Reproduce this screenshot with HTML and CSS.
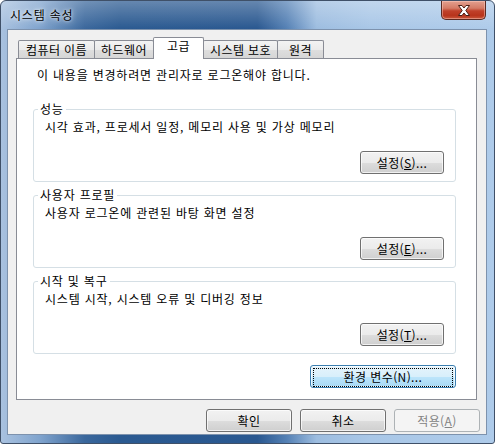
FILE: index.html
```html
<!DOCTYPE html>
<html lang="ko">
  <head>
    <meta charset="UTF-8">
    <title>시스템 속성</title>
    <link rel="stylesheet" href="styles.css">
  </head>
  <body>
    <div class="window">
      <div class="titlebar">
        <span class="title">시스템 속성</span>
        <span class="close">
          <svg width="14" height="11" viewBox="0 0 14 11">
            <path d="M1.5 0.5 H5 L7 3 L9 0.5 H12.5 L8.8 5.5 L12.5 10.5 H9 L7 8 L5 10.5 H1.5 L5.2 5.5 Z"
              fill="#fff" stroke="#4a1e14" stroke-width="1" stroke-linejoin="round"/>
          </svg>
        </span>
      </div>

      <div class="client">
        <div class="tabs">
          <div class="tab tab-name">컴퓨터 이름</div>
          <div class="tab tab-hw">하드웨어</div>
          <div class="tab tab-adv selected">고급</div>
          <div class="tab tab-prot">시스템 보호</div>
          <div class="tab tab-remote">원격</div>
        </div>

        <div class="panel">
          <p class="notice">이 내용을 변경하려면 관리자로 로그온해야 합니다.</p>

          <fieldset class="group first">
            <legend>성능</legend>
            <p class="desc">시각 효과, 프로세서 일정, 메모리 사용 및 가상 메모리</p>
            <div class="group-actions">
              <button class="btn btn-settings">설정(<u>S</u>)...</button>
            </div>
          </fieldset>

          <fieldset class="group">
            <legend>사용자 프로필</legend>
            <p class="desc">사용자 로그온에 관련된 바탕 화면 설정</p>
            <div class="group-actions">
              <button class="btn btn-settings">설정(<u>E</u>)...</button>
            </div>
          </fieldset>

          <fieldset class="group">
            <legend>시작 및 복구</legend>
            <p class="desc">시스템 시작, 시스템 오류 및 디버깅 정보</p>
            <div class="group-actions">
              <button class="btn btn-settings">설정(<u>T</u>)...</button>
            </div>
          </fieldset>

          <div class="panel-actions">
            <button class="btn btn-default btn-env"><span class="focus">환경 변수(N)...</span></button>
          </div>
        </div>

        <div class="dialog-actions">
          <button class="btn btn-dialog">확인</button>
          <button class="btn btn-dialog">취소</button>
          <button class="btn btn-dialog" disabled>적용(<u>A</u>)</button>
        </div>
      </div>
    </div>
  </body>
</html>
```

FILE: styles.css
```css
body {
  margin: 0;
  background: #fff;
  font-family: "Noto Sans CJK KR", "Noto Sans", sans-serif;
  font-size: 12px;
  letter-spacing: 0.8px;
  color: #000;
}
p {margin: 0;}
u {text-decoration: underline; text-underline-offset: 1px;}

.window {
  box-sizing: border-box;
  width: 495px;
  height: 444px;
  border: 1px solid #3f5068;
  border-radius: 6px 6px 3px 3px;
  padding: 0 7px 8px 6px;
  display: flex;
  flex-direction: column;
  background:
    linear-gradient(rgba(255,255,255,.28), rgba(255,255,255,0) 28px),
    linear-gradient(to right, #a9c2e0 0, #7fa3cd 8%, #3a679c 17%, #2b5a91 24%, #2a5890 52%, #5581b5 58%, #9dbde0 64%, #a9c7e7 75%, #aecbea 100%);
}

/* title bar */
.titlebar {
  height: 28px;
  margin: 0 -7px 0 -6px;
  display: flex;
  justify-content: space-between;
  align-items: flex-start;
}
.title {
  padding: 6px 0 0 9px;
  line-height: 15px;
  text-shadow: 0 0 6px rgba(255,255,255,.9), 0 0 3px rgba(255,255,255,.8);
}
.close {
  width: 45px;
  height: 19px;
  margin-right: 8px;
  box-sizing: border-box;
  border: 1px solid #5b2a22;
  border-top: none;
  border-radius: 0 0 5px 5px;
  background: linear-gradient(#e3a08f 0, #d47b66 40%, #c0412a 55%, #b8341c 80%, #c9583c 100%);
  box-shadow: inset 0 0 0 1px rgba(255,210,200,.45);
  display: flex;
  align-items: center;
  justify-content: center;
}

/* client area */
.client {
  flex: 1;
  border: 1px solid #7d92ad;
  background: #f0f0f0;
  padding: 7px 0 0 8px;
  display: flex;
  flex-direction: column;
}

.tabs {
  display: flex;
  align-items: flex-end;
  height: 21px;
  padding-left: 2px;
}
.tab {
  box-sizing: border-box;
  height: 18px;
  margin-left: -1px;
  border: 1px solid #898c95;
  border-bottom: none;
  border-radius: 2px 2px 0 0;
  background: linear-gradient(#f3f3f3, #ebebeb 50%, #dedede 51%, #d6d6d6);
  text-align: center;
  line-height: 17px;
  letter-spacing: 0.4px;
}
.tab:first-child {margin-left: 0;}
.tab-name {width: 77px;}
.tab-hw {width: 60px;}
.tab-adv {width: 51px;}
.tab-prot {width: 75px;}
.tab-remote {width: 47px;}
.tab.selected {
  height: 22px;
  margin-bottom: -1px;
  background: #fff;
  line-height: 15px;
  position: relative;
}

.panel {
  box-sizing: border-box;
  height: 342px;
  margin-right: 9px;
  border: 1px solid #898c95;
  background: #fff;
  padding: 9px 0 0 16px;
}
.notice {
  line-height: 14px;
  padding-left: 4px;
}

.group {
  box-sizing: border-box;
  width: 423px;
  height: 80px;
  margin: 6px 0 0 0;
  padding: 0;
  border: 1px solid #d5dfe5;
  border-radius: 3px;
}
.group.first {margin-top: 20px;}
.group legend {
  margin-left: 4px;
  padding: 0 2px;
  line-height: 14px;
}
.desc {
  margin-top: 4px;
  padding-left: 11px;
  line-height: 14px;
}
.group-actions {
  display: flex;
  justify-content: flex-end;
  margin: 17px 11px 0 0;
}

/* buttons */
.btn {
  box-sizing: border-box;
  height: 23px;
  padding: 0;
  border: 1px solid #707070;
  border-radius: 3px;
  background: linear-gradient(#f2f2f2, #ebebeb 50%, #dddddd 51%, #cfcfcf);
  box-shadow: inset 0 0 0 1px rgba(255,255,255,.7);
  font: inherit;
  letter-spacing: 0.4px;
  color: #000;
  line-height: 19px;
}
.btn-settings {width: 84px;}
.btn-env {width: 146px;}
.btn-dialog {width: 86px;}
.btn-default {
  border-color: #3c7fb1;
  background: linear-gradient(#e5f4fc, #d8effb 50%, #bde5fb 51%, #a7d9f5);
  padding: 2px;
}
.btn-default .focus {
  display: block;
  height: 17px;
  border: 1px dotted #000;
  line-height: 15px;
}
.btn:disabled {
  border-color: #adb2b5;
  background: #f4f4f4;
  box-shadow: none;
  color: #838383;
}

.panel-actions {
  display: flex;
  justify-content: flex-end;
  width: 423px;
  margin-top: 11px;
}

.dialog-actions {
  display: flex;
  justify-content: flex-end;
  gap: 8px;
  margin: 9px 6px 0 0;
}
```
